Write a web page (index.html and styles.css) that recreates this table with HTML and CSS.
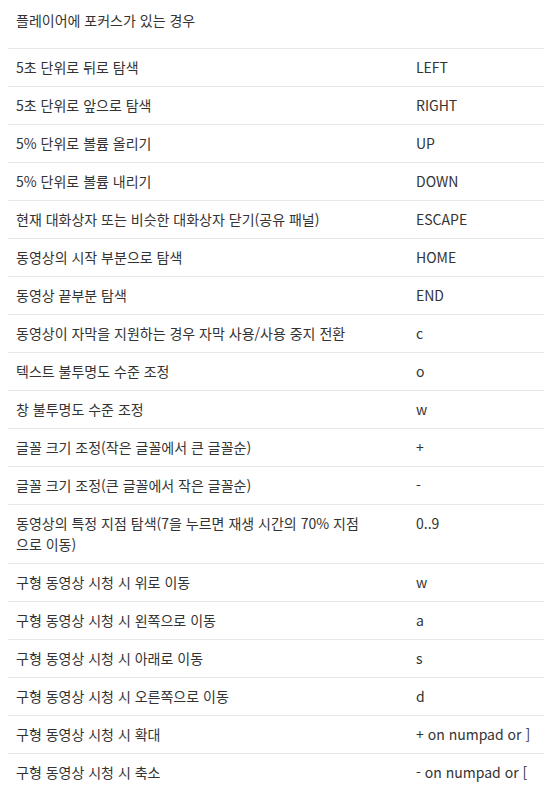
FILE: index.html
```html
<!DOCTYPE html>
<html lang="ko">
<head>
    <meta charset="UTF-8">
    <meta name="viewport" content="width=device-width, initial-scale=1.0">
    <title>키보드 단축키</title>
    <link rel="stylesheet" href="styles.css">
</head>
<body>
    <table class="shortcuts">
        <colgroup>
            <col class="col-action">
            <col class="col-key">
        </colgroup>
        <thead>
            <tr>
                <th colspan="2">플레이어에 포커스가 있는 경우</th>
            </tr>
        </thead>
        <tbody>
            <tr><td>5초 단위로 뒤로 탐색</td><td>LEFT</td></tr>
            <tr><td>5초 단위로 앞으로 탐색</td><td>RIGHT</td></tr>
            <tr><td>5% 단위로 볼륨 올리기</td><td>UP</td></tr>
            <tr><td>5% 단위로 볼륨 내리기</td><td>DOWN</td></tr>
            <tr><td>현재 대화상자 또는 비슷한 대화상자 닫기(공유 패널)</td><td>ESCAPE</td></tr>
            <tr><td>동영상의 시작 부분으로 탐색</td><td>HOME</td></tr>
            <tr><td>동영상 끝부분 탐색</td><td>END</td></tr>
            <tr><td>동영상이 자막을 지원하는 경우 자막 사용/사용 중지 전환</td><td>c</td></tr>
            <tr><td>텍스트 불투명도 수준 조정</td><td>o</td></tr>
            <tr><td>창 불투명도 수준 조정</td><td>w</td></tr>
            <tr><td>글꼴 크기 조정(작은 글꼴에서 큰 글꼴순)</td><td>+</td></tr>
            <tr><td>글꼴 크기 조정(큰 글꼴에서 작은 글꼴순)</td><td>-</td></tr>
            <tr><td>동영상의 특정 지점 탐색(7을 누르면 재생 시간의 70% 지점으로 이동)</td><td>0..9</td></tr>
            <tr><td>구형 동영상 시청 시 위로 이동</td><td>w</td></tr>
            <tr><td>구형 동영상 시청 시 왼쪽으로 이동</td><td>a</td></tr>
            <tr><td>구형 동영상 시청 시 아래로 이동</td><td>s</td></tr>
            <tr><td>구형 동영상 시청 시 오른쪽으로 이동</td><td>d</td></tr>
            <tr><td>구형 동영상 시청 시 확대</td><td>+ on numpad or ]</td></tr>
            <tr><td>구형 동영상 시청 시 축소</td><td>- on numpad or [</td></tr>
        </tbody>
    </table>
</body>
</html>
```

FILE: styles.css
```css
body {
    font-family: "Noto Sans CJK KR", "Noto Sans", sans-serif;
    font-size: 14px;
    line-height: 21px;
    margin: 0 0 0 8px;
    padding: 0;
    background-color: #ffffff;
    color: #333333;
    overflow: hidden;
}

.shortcuts {
    border-collapse: collapse;
    table-layout: fixed;
    width: 544px;
}

.col-action {
    width: 400px;
}

.shortcuts th {
    font-weight: normal;
    text-align: left;
    padding: 10px 8px 17px;
    border-bottom: 1px solid #e8e8e8;
}

.shortcuts td {
    padding: 8px 8px;
    border-bottom: 1px solid #e8e8e8;
    vertical-align: top;
}

.shortcuts td:first-child {
    padding-right: 38px;
}

.shortcuts tbody tr:last-child td {
    border-bottom: none;
}
```
